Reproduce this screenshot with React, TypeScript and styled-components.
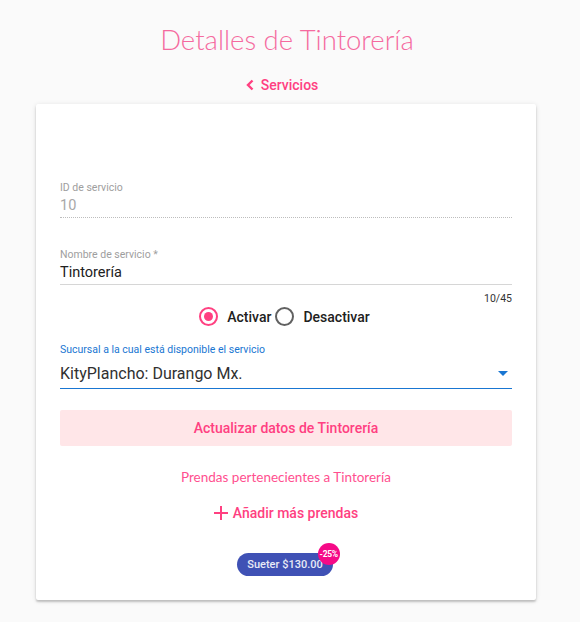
import React from "react";
import styled, { createGlobalStyle } from "styled-components";

const Global = createGlobalStyle`
  html, body { margin: 0; padding: 0; background: #fafafa; }
  body { font-family: Roboto, "Liberation Sans", sans-serif; }
  * { box-sizing: border-box; }
`;

const Page = styled.div`
  width: 580px;
  min-height: 622px;
  display: flex;
  flex-direction: column;
  align-items: center;
  padding-top: 20px;
`;

const Title = styled.h1`
  margin: 0 0 0 -6px;
  font-family: Lato, "Open Sans", sans-serif;
  font-weight: 300;
  font-size: 27.5px;
  line-height: 40px;
  color: #f56a9f;
`;

const BackLink = styled.a`
  margin-top: 16px;
  display: flex;
  align-items: center;
  gap: 6px;
  font-family: Roboto, sans-serif;
  font-weight: 500;
  font-size: 14px;
  color: #ff4081;
  line-height: 18px;
  margin-left: -17px;
`;

const Card = styled.div`
  margin-top: 10px;
  width: 500px;
  margin-left: -8px;
  background: #fff;
  box-shadow: 0 2px 2px rgba(0,0,0,0.18), 0 1px 5px rgba(0,0,0,0.12);
  border-radius: 2px;
  padding: 77px 24px 24px;
  display: flex;
  flex-direction: column;
`;

const Field = styled.div<{ $mt?: number }>`
  display: flex;
  flex-direction: column;
  margin-top: ${(p) => p.$mt ?? 0}px;
`;

const Label = styled.div<{ $color?: string }>`
  font-size: 10.5px;
  line-height: 14px;
  color: ${(p) => p.$color ?? "#9e9e9e"};
`;

const Value = styled.div<{ $color?: string; $size?: number; $line?: string; $lh?: number; $pt?: number }>`
  font-size: ${(p) => p.$size ?? 14}px;
  line-height: ${(p) => p.$lh ?? 21}px;
  color: ${(p) => p.$color ?? "#212121"};
  padding-top: ${(p) => p.$pt ?? 0}px;
  padding-bottom: 1px;
  border-bottom: ${(p) => p.$line ?? "1px solid #d6d6d6"};
  display: flex;
  justify-content: space-between;
  align-items: center;
`;

const Counter = styled.div`
  align-self: flex-end;
  font-size: 10.5px;
  color: #333;
  margin-top: 7px;
  line-height: 14px;
`;

const RadioRow = styled.div`
  display: flex;
  justify-content: center;
  align-items: center;
  gap: 4px;
  margin-left: -3px;
  height: 24px;
`;

const RadioItem = styled.label`
  display: flex;
  align-items: center;
  gap: 9px;
  font-weight: 500;
  font-size: 14px;
  color: #212121;
  margin-top: -3px;
`;

const RadioCircle = styled.span<{ $on?: boolean }>`
  width: 19px;
  height: 19px;
  border-radius: 50%;
  border: 2px solid ${(p) => (p.$on ? "#ff4081" : "#616161")};
  display: flex;
  align-items: center;
  justify-content: center;
  &::after {
    content: "";
    width: 9px;
    height: 9px;
    border-radius: 50%;
    background: ${(p) => (p.$on ? "#ff4081" : "transparent")};
  }
`;

const Arrow = styled.span`
  width: 0;
  height: 0;
  border-left: 5px solid transparent;
  border-right: 5px solid transparent;
  border-top: 5px solid #1976d2;
  margin-right: 4px;
`;

const UpdateButton = styled.button`
  margin-top: 21px;
  height: 36px;
  border: none;
  border-radius: 2px;
  background: #ffe6e8;
  color: #ff4081;
  font-family: Roboto, sans-serif;
  font-weight: 500;
  font-size: 14px;
`;

const Subtitle = styled.div`
  margin-top: 22px;
  text-align: center;
  font-family: Lato, sans-serif;
  font-size: 13.5px;
  color: #ff4f8f;
  line-height: 18px;
`;

const AddLink = styled.div`
  margin-top: 18px;
  display: flex;
  justify-content: center;
  align-items: center;
  gap: 5px;
  font-weight: 500;
  font-size: 14px;
  color: #ff4081;
  line-height: 18px;
`;

const ChipRow = styled.div`
  margin-top: 31px;
  display: flex;
  justify-content: center;
  margin-left: -2px;
`;

const Chip = styled.span`
  position: relative;
  background: #3f51b5;
  color: #e8eaf6;
  font-weight: 500;
  font-size: 11px;
  height: 23px;
  line-height: 23px;
  padding: 0 10px;
  border-radius: 12px;
`;

const Badge = styled.span`
  position: absolute;
  top: -10px;
  right: -7px;
  width: 22px;
  height: 22px;
  border-radius: 50%;
  background: #f50a87;
  color: #fff;
  font-size: 8.5px;
  font-weight: 700;
  display: flex;
  align-items: center;
  justify-content: center;
  letter-spacing: -0.3px;
`;

export default function App() {
  return (
    <>
      <Global />
      <Page>
        <Title>Detalles de Tintorería</Title>
        <BackLink>
          <svg width="10" height="12" viewBox="0 0 10 12">
            <path d="M7.5 1.5 L3 6 L7.5 10.5" stroke="#ff4081" strokeWidth="2.4" fill="none" />
          </svg>
          Servicios
        </BackLink>
        <Card>
          <Field>
            <Label>ID de servicio</Label>
            <Value $color="#a8a8a8" $size={14.5} $line="1px dotted #bdbdbd">10</Value>
          </Field>
          <Field $mt={30}>
            <Label>Nombre de servicio *</Label>
            <Value $size={14.5}>Tintorería</Value>
          </Field>
          <Counter>10/45</Counter>
          <RadioRow>
            <RadioItem>
              <RadioCircle $on />
              Activar
            </RadioItem>
            <RadioItem>
              <RadioCircle />
              Desactivar
            </RadioItem>
          </RadioRow>
          <Field $mt={13}>
            <Label $color="#1976d2">Sucursal a la cual está disponible el servicio</Label>
            <Value $size={16} $lh={27} $pt={3} $color="#303030" $line="1px solid #1976d2">
              KityPlancho: Durango Mx.
              <Arrow />
            </Value>
          </Field>
          <UpdateButton>Actualizar datos de Tintorería</UpdateButton>
          <Subtitle>Prendas pertenecientes a Tintorería</Subtitle>
          <AddLink>
            <svg width="14" height="14" viewBox="0 0 14 14">
              <path d="M7 0 V14 M0 7 H14" stroke="#ff4081" strokeWidth="2" />
            </svg>
            Añadir más prendas
          </AddLink>
          <ChipRow>
            <Chip>
              Sueter $130.00
              <Badge>-25%</Badge>
            </Chip>
          </ChipRow>
        </Card>
      </Page>
    </>
  );
}
